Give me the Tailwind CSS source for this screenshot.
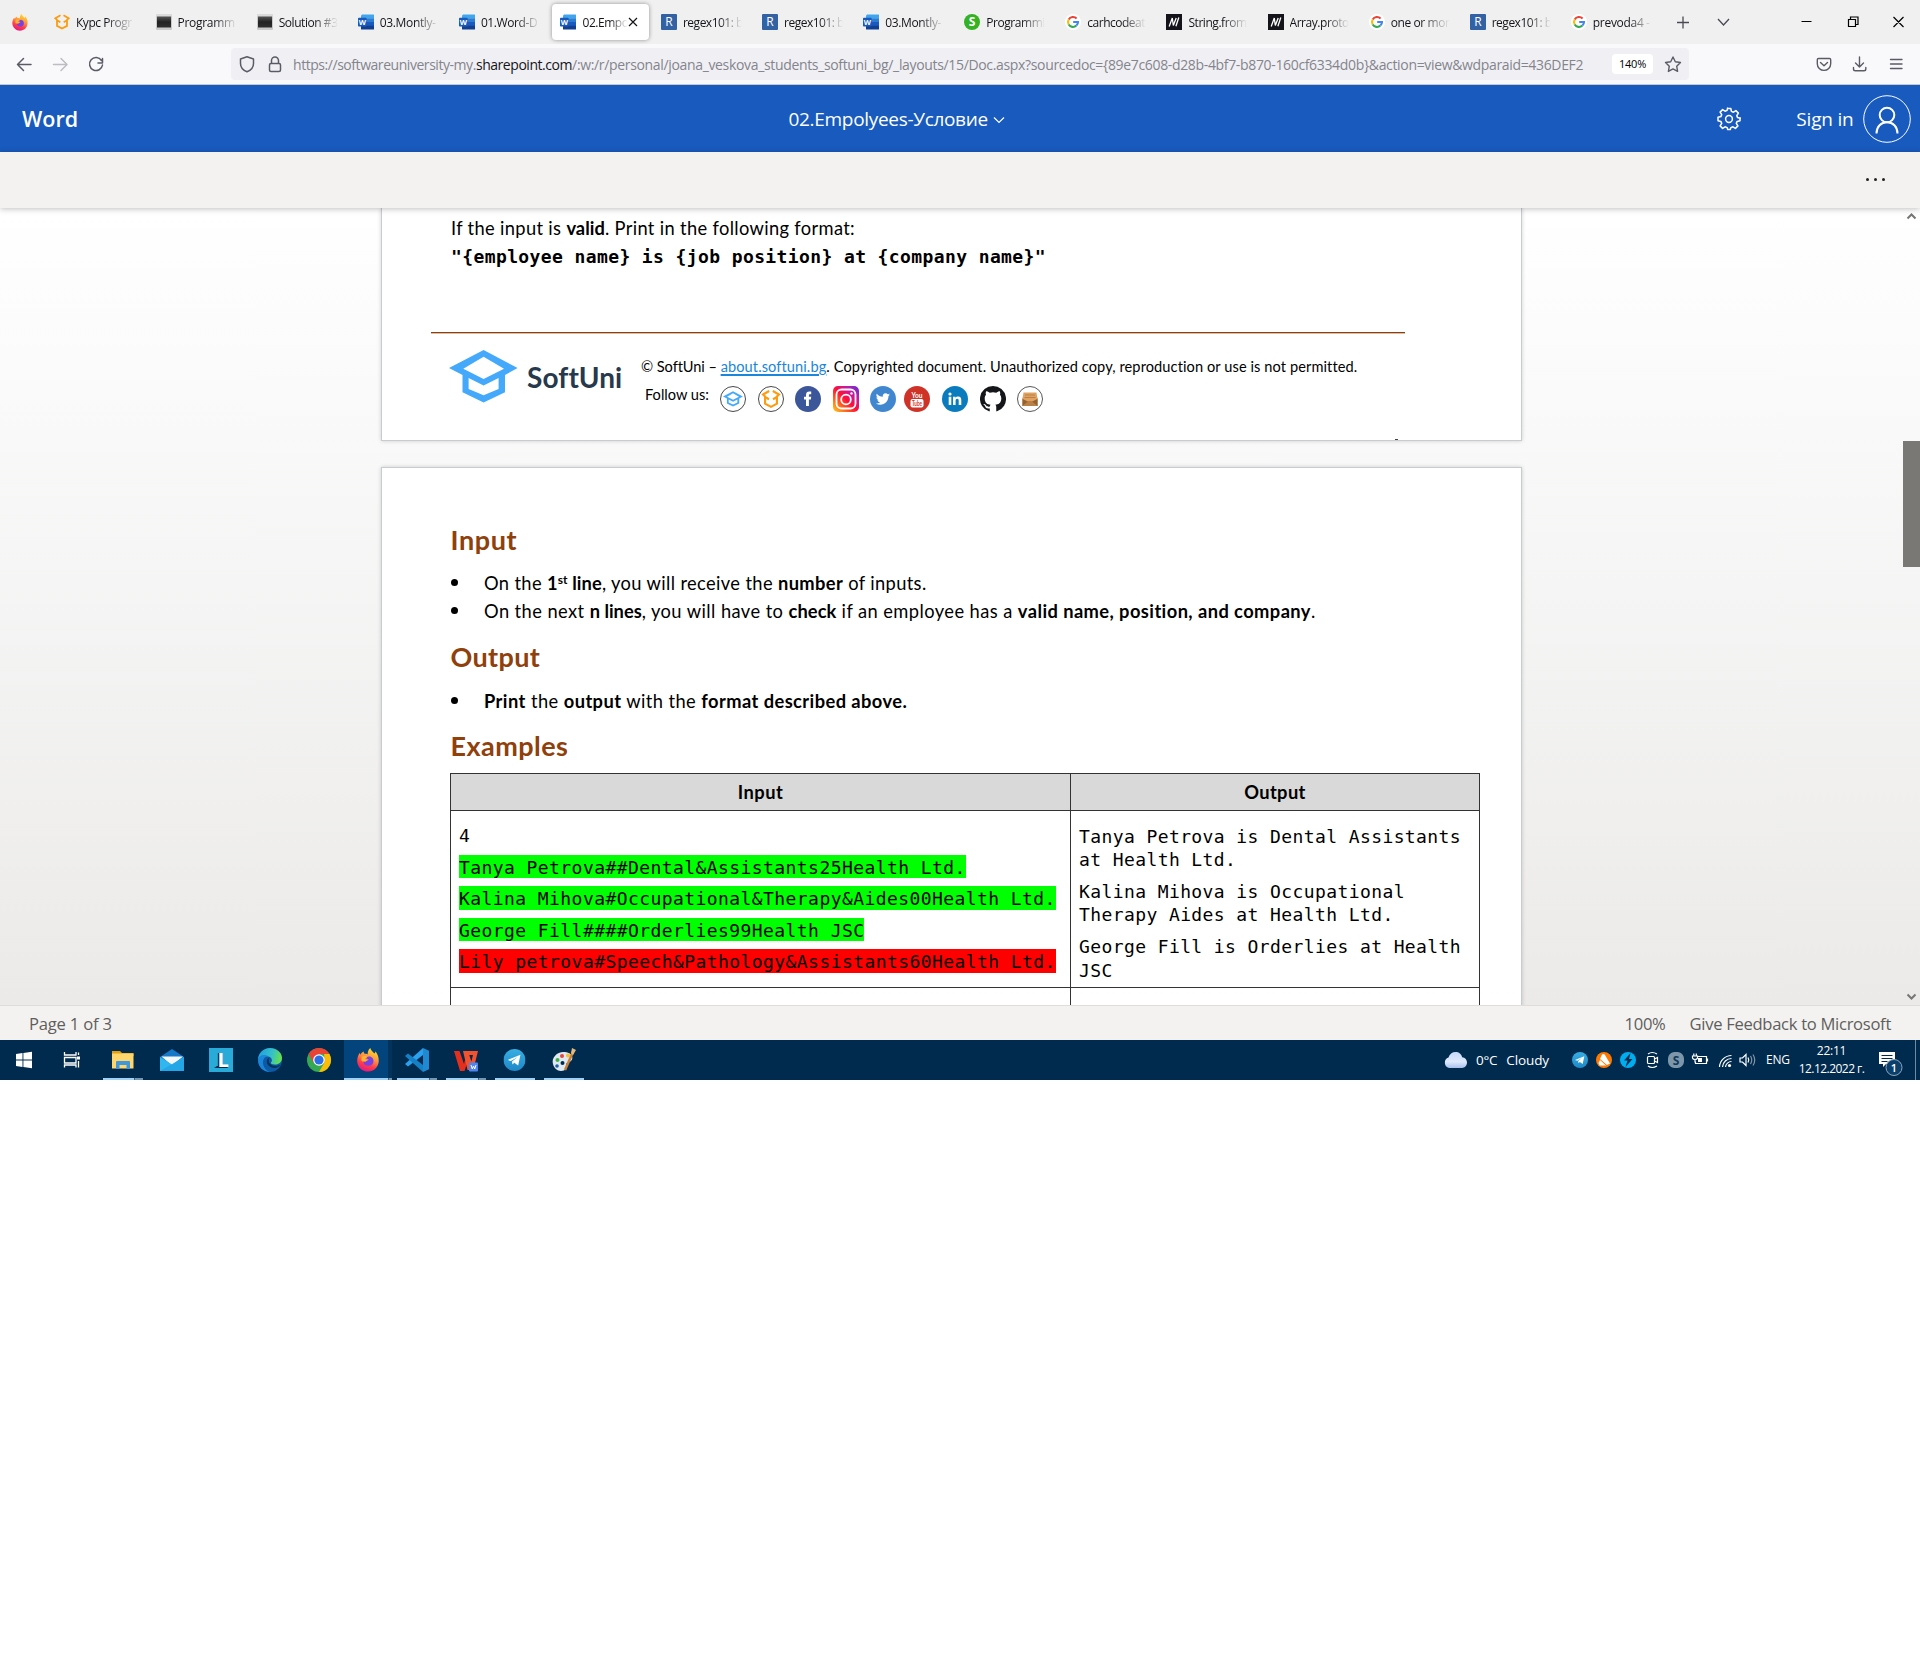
<!DOCTYPE html>
<html lang="en">
<head>
<meta charset="utf-8">
<title>02.Empolyees-Условие</title>
<script src="https://cdn.jsdelivr.net/npm/@tailwindcss/browser@4"></script>
</head>
<body class="bg-white text-black font-['Open_Sans',sans-serif] w-[1920px] h-[1664px] overflow-hidden">
<!-- Icon library -->
<svg width="0" height="0" class="absolute">
  <defs>
    <linearGradient id="gFox" x1="0.7" y1="0" x2="0.3" y2="1"><stop offset="0" stop-color="#ffe226"/><stop offset=".4" stop-color="#ff9640"/><stop offset=".7" stop-color="#ff3c4a"/><stop offset="1" stop-color="#e31587"/></linearGradient>
    <linearGradient id="gIg" x1="0" y1="1" x2="1" y2="0"><stop offset="0" stop-color="#ffd21f"/><stop offset=".3" stop-color="#ff5a1f"/><stop offset=".5" stop-color="#ff0d3c"/><stop offset=".75" stop-color="#c01cab"/><stop offset="1" stop-color="#5b2fd6"/></linearGradient>
    <linearGradient id="gTerm" x1="0" y1="0" x2="0" y2="1"><stop offset="0" stop-color="#555"/><stop offset=".5" stop-color="#222"/><stop offset="1" stop-color="#2e2e2e"/></linearGradient>
    <linearGradient id="gEdge" x1="0" y1="0.2" x2="1" y2="0.4"><stop offset="0" stop-color="#1f9fe0"/><stop offset=".6" stop-color="#35c1c8"/><stop offset="1" stop-color="#66e04e"/></linearGradient>
    <linearGradient id="gTg" x1="0" y1="0" x2="0" y2="1"><stop offset="0" stop-color="#37aee2"/><stop offset="1" stop-color="#1e88c8"/></linearGradient>
    <linearGradient id="gCloud" x1="0" y1="0" x2="0" y2="1"><stop offset="0" stop-color="#c6d8fa"/><stop offset=".6" stop-color="#dfe9fd"/><stop offset="1" stop-color="#a9c0ee"/></linearGradient>
    <symbol id="cap" viewBox="0 0 69 53"><path fill-rule="evenodd" d="M34.6 0L68.6 18L56 25V42.3L34.6 52.5L13.5 42.3V25L0 18ZM34.6 6.7L14.3 18.7L34.6 29L55 18.7ZM19.6 28V39L34.6 45.3L49.6 39V28L34.6 35.6Z"/></symbol>
    <symbol id="codecap" viewBox="0 0 16 16"><path fill="none" stroke="#fc9c10" stroke-width="1.800" stroke-linejoin="miter" d="M6.500 1.300L1.300 4.200L3 5.800V11.900L8 14.600L13 11.900V5.800L14.700 4.200L9.500 1.300M3 6.300L6.300 8.200M13 6.300L9.700 8.200"/></symbol>
    <symbol id="term" viewBox="0 0 16 16"><rect width="16" height="16" rx="1" fill="#c9c9c9"/><rect y="0" width="16" height="2.500" fill="#dadada"/><rect x="1" y="2.500" width="14" height="11" fill="url(#gTerm)"/></symbol>
    <symbol id="word" viewBox="0 0 16 16"><path fill="#41a5ee" d="M4 .5h11.500q.5 0 .5.5v3.500H3V1.500z"/><path fill="#2b7cd3" d="M3 4.300h13v3.800H3z"/><path fill="#185abd" d="M3 8h13v4H3z"/><path fill="#103f91" d="M3 11.800h13V15q0 .5-.5.500h-12Q3 15.500 3 15z"/><rect y="3.700" width="8.600" height="8.800" rx=".8" fill="#185abd"/><text x="4.300" y="10.900" text-anchor="middle" font-size="7.500" font-weight="700" font-family="Open Sans" fill="#fff">W</text></symbol>
    <symbol id="regex" viewBox="0 0 16 16"><rect width="16" height="16" rx="1" fill="#3362a4"/><text x="8" y="12.300" text-anchor="middle" font-size="12" font-family="Open Sans" fill="#fff">R</text></symbol>
    <symbol id="sgreen" viewBox="0 0 16 16"><circle cx="8" cy="8" r="8" fill="#34b224"/><text x="8" y="12.300" text-anchor="middle" font-size="12" font-weight="700" font-family="Open Sans" fill="#fff">S</text></symbol>
    <symbol id="google" viewBox="0 0 16 16"><circle cx="8" cy="8" r="8" fill="#fff"/><g fill="none" stroke-width="2.100"><path stroke="#ea4335" d="M3.700 5.500A5 5 0 0 1 11.600 4.500"/><path stroke="#fbbc05" d="M3.700 5.500A5 5 0 0 0 3.700 10.500"/><path stroke="#34a853" d="M3.700 10.500A5 5 0 0 0 11.400 11.600"/><path stroke="#4285f4" d="M11.400 11.600A5 5 0 0 0 13 8H8.200"/></g></symbol>
    <symbol id="mdn" viewBox="0 0 16 16"><rect width="16" height="16" fill="#15141a"/><path d="M3.200 12.500L6.300 4L7.300 11.500L10.200 4M9.900 12.300L12.800 3.500" stroke="#fff" stroke-width="1.300" fill="none"/></symbol>
    <symbol id="fox" viewBox="0 0 24 26"><path fill="url(#gFox)" d="M14.500 0c.3 2.500 3 4 4.300 6 1-.8 1.200-1.600 1.200-2.600 2.500 3 4 7 3.600 11.200C23 21 18.200 25.500 12 25.500S.6 20.600.3 14.500C.1 11 1.300 7.500 3.300 5.200c0 .9.200 1.700.5 2.100.7-1.500 2-3 3.700-3.600-.2 1 .2 2 1 2.600 1 .1 2.200 0 3.200.6C11.500 4 12.500 1.500 14.500 0z"/><path fill="#7542e5" d="M12 9.500c3.600-1 6.300 2 5.900 5.300-.4 2.900-3 4.700-5.700 4.500-3-.2-5.200-2.300-5.300-5 .8.500 2 .7 3 .3 1-.5 1.300-1.500 2.800-1.600-.5-1.500-2-1.600-3-1.800.4-.9 1.300-1.500 2.300-1.700z"/><path fill="#ffb52e" d="M5 9.500c1.500-1 3.500-1.200 5-.6 1 .3 1 1 .5 1.600-1 .3-1.600.8-2 1.500l3.200 1c-1.200 1.500-3.500 2.200-6.700 1z"/></symbol>
    <symbol id="tg" viewBox="0 0 24 24"><circle cx="12" cy="12" r="12" fill="url(#gTg)"/><path fill="#fff" d="M4.500 12L18.500 6.300L16 18L11.800 15L9.700 17L9.300 13.600L15.500 8.600L8 13.200z"/></symbol>
  </defs>
</svg>

<!-- Tab strip -->
<div class="flex items-center h-11 bg-[#f0f0f0] text-[12px] leading-4">
  <div class="flex items-center justify-center w-[42px] pr-1 shrink-0"><svg width="16" height="17" class="ml-0.5"><use href="#fox"/></svg></div>
  <div class="w-px h-11 bg-[#b5b5b8] mr-[3px]"></div>
  <div class="flex text-[#15141a]">
    <div class="flex items-center w-[101.1px] pl-[9px] gap-[6px]"><svg width="16" height="16" class="shrink-0"><use href="#codecap"/></svg><span class="w-[59px] mt-px overflow-hidden whitespace-nowrap tracking-[-0.450px] [mask-image:linear-gradient(to_right,black_50%,transparent)]">Курс Progr</span></div>
    <div class="flex items-center w-[101.1px] pl-[9.500px] gap-[6px]"><svg width="16" height="16" class="shrink-0"><use href="#term"/></svg><span class="w-[59px] mt-px overflow-hidden whitespace-nowrap tracking-[-0.300px] [mask-image:linear-gradient(to_right,black_60%,transparent)]">Programm</span></div>
    <div class="flex items-center w-[101.1px] pl-[9.500px] gap-[6px]"><svg width="16" height="16" class="shrink-0"><use href="#term"/></svg><span class="w-[59px] mt-px overflow-hidden whitespace-nowrap tracking-[-0.450px] [mask-image:linear-gradient(to_right,black_60%,transparent)]">Solution #3</span></div>
    <div class="flex items-center w-[101.1px] pl-[9.500px] gap-[6px]"><svg width="16" height="16" class="shrink-0"><use href="#word"/></svg><span class="w-[59px] mt-px overflow-hidden whitespace-nowrap tracking-[-0.350px] [mask-image:linear-gradient(to_right,black_60%,transparent)]">03.Montly-</span></div>
    <div class="flex items-center w-[101.1px] pl-[9.500px] gap-[6px]"><svg width="16" height="16" class="shrink-0"><use href="#word"/></svg><span class="w-[59px] mt-px overflow-hidden whitespace-nowrap tracking-[-0.400px] [mask-image:linear-gradient(to_right,black_60%,transparent)]">01.Word-D</span></div>
    <div class="flex items-center w-[97px] mx-[2px] pl-[8px] gap-[6px] h-9 bg-white rounded shadow-[0_0_4px_rgba(0,0,0,0.4)]"><svg width="16" height="16" class="shrink-0"><use href="#word"/></svg><span class="w-[46px] mt-px overflow-hidden whitespace-nowrap tracking-[-0.450px] [mask-image:linear-gradient(to_right,black_60%,transparent)]">02.Empo</span><svg width="10" height="10" viewBox="0 0 10 10" class="shrink-0 -ml-[6px]"><path d="M1 1l8 8M9 1L1 9" stroke="#15141a" stroke-width="1.200"/></svg></div>
    <div class="flex items-center w-[101.1px] pl-[9.500px] gap-[6px]"><svg width="16" height="16" class="shrink-0"><use href="#regex"/></svg><span class="w-[59px] mt-px overflow-hidden whitespace-nowrap tracking-[-0.500px] [mask-image:linear-gradient(to_right,black_60%,transparent)]">regex101: b</span></div>
    <div class="flex items-center w-[101.1px] pl-[9.500px] gap-[6px]"><svg width="16" height="16" class="shrink-0"><use href="#regex"/></svg><span class="w-[59px] mt-px overflow-hidden whitespace-nowrap tracking-[-0.500px] [mask-image:linear-gradient(to_right,black_60%,transparent)]">regex101: b</span></div>
    <div class="flex items-center w-[101.1px] pl-[9.500px] gap-[6px]"><svg width="16" height="16" class="shrink-0"><use href="#word"/></svg><span class="w-[59px] mt-px overflow-hidden whitespace-nowrap tracking-[-0.350px] [mask-image:linear-gradient(to_right,black_60%,transparent)]">03.Montly-</span></div>
    <div class="flex items-center w-[101.1px] pl-[9.500px] gap-[6px]"><svg width="16" height="16" class="shrink-0"><use href="#sgreen"/></svg><span class="w-[59px] mt-px overflow-hidden whitespace-nowrap tracking-[-0.450px] [mask-image:linear-gradient(to_right,black_60%,transparent)]">Programmi</span></div>
    <div class="flex items-center w-[101.1px] pl-[9.500px] gap-[6px]"><svg width="16" height="16" class="shrink-0"><use href="#google"/></svg><span class="w-[59px] mt-px overflow-hidden whitespace-nowrap tracking-[-0.500px] [mask-image:linear-gradient(to_right,black_60%,transparent)]">carhcodeat</span></div>
    <div class="flex items-center w-[101.1px] pl-[9.500px] gap-[6px]"><svg width="16" height="16" class="shrink-0"><use href="#mdn"/></svg><span class="w-[59px] mt-px overflow-hidden whitespace-nowrap tracking-[-0.450px] [mask-image:linear-gradient(to_right,black_60%,transparent)]">String.from</span></div>
    <div class="flex items-center w-[101.1px] pl-[9.500px] gap-[6px]"><svg width="16" height="16" class="shrink-0"><use href="#mdn"/></svg><span class="w-[59px] mt-px overflow-hidden whitespace-nowrap tracking-[-0.450px] [mask-image:linear-gradient(to_right,black_60%,transparent)]">Array.proto</span></div>
    <div class="flex items-center w-[101.1px] pl-[9.500px] gap-[6px]"><svg width="16" height="16" class="shrink-0"><use href="#google"/></svg><span class="w-[59px] mt-px overflow-hidden whitespace-nowrap tracking-[-0.400px] [mask-image:linear-gradient(to_right,black_50%,transparent)]">one or mor</span></div>
    <div class="flex items-center w-[101.1px] pl-[9.500px] gap-[6px]"><svg width="16" height="16" class="shrink-0"><use href="#regex"/></svg><span class="w-[59px] mt-px overflow-hidden whitespace-nowrap tracking-[-0.500px] [mask-image:linear-gradient(to_right,black_60%,transparent)]">regex101: b</span></div>
    <div class="flex items-center w-[101.1px] pl-[9.500px] gap-[6px]"><svg width="16" height="16" class="shrink-0"><use href="#google"/></svg><span class="w-[59px] mt-px overflow-hidden whitespace-nowrap tracking-[-0.300px] [mask-image:linear-gradient(to_right,black_60%,transparent)]">prevoda4 -</span></div>
  </div>
  <svg width="260" height="44" viewBox="1660 0 260 44" class="ml-auto shrink-0" fill="none"><path d="M1675 22.500h12M1681 16.500v12M1716 19l5.500 6 5.500-6" stroke="#4b4a54" stroke-width="1.300"/><path d="M1799.500 21.500h10M1846.500 19.500h7v7h-7zM1848.500 19.500v-2.500h7.500v7.500h-2.500M1891.500 17l10 10M1901.500 17l-10 10" stroke="#000" stroke-width="1.200"/></svg>
</div>

<!-- Address bar -->
<div class="flex items-center h-[41px] bg-[#f9f9fb] border-b border-[#c8c8cc]">
  <svg width="231" height="40" viewBox="0 44 231 40" class="shrink-0" fill="none" stroke-width="1.500" stroke-linecap="round" stroke-linejoin="round"><path stroke="#5b5b66" d="M31 64.500H17.500M23.500 58.500l-6 6 6 6M101.500 60.500a6.500 6.500 0 1 0 1 4.500M102.500 58.500v4.500h-4.500"/><path stroke="#bdbdc2" d="M53.500 64.500H66.500M61 58.500l6 6-6 6"/></svg>
  <div class="flex items-center w-[1458px] h-8 bg-[#f0f0f4] rounded">
    <svg width="62" height="32" viewBox="231 48 62 32" class="shrink-0" fill="none" stroke="#5b5b66" stroke-width="1.500"><path d="M247 56.800l6.500 2.200v4.500c0 4-2.700 6.800-6.500 8.200-3.800-1.400-6.500-4.200-6.500-8.200V59z" stroke-linejoin="round"/><rect x="269.500" y="63.500" width="11" height="8" rx="1.500"/><path d="M271.500 63.500v-3a3.500 3.500 0 0 1 7 0v3"/></svg>
    <span class="whitespace-nowrap text-[14px] leading-[18px] pt-px tracking-[-0.340px] text-[#84848c]"><span class="tracking-[-0.450px]">https://softwareuniversity-my.<span class="text-[#15141a]">sharepoint.com</span></span>/:w:/r/personal/joana_veskova_students_softuni_bg/_layouts/15/Doc.aspx?sourcedoc={89e7c608-d28b-4bf7-b870-160cf6334d0b}&amp;action=view&amp;wdparaid=436DEF2</span>
    <div class="flex items-center justify-center ml-auto w-[41px] h-5 bg-white rounded-sm text-[11px] tracking-[-0.200px] pt-px">140%</div>
    <svg width="36" height="32" viewBox="1653 48 36 32" class="shrink-0"><path d="M1673 57l2.300 4.800 5.200.7-3.800 3.700.9 5.200-4.600-2.500-4.600 2.500.9-5.200-3.800-3.700 5.200-.7z" fill="none" stroke="#5b5b66" stroke-width="1.400" stroke-linejoin="round"/></svg>
  </div>
  <svg width="120" height="40" viewBox="1800 44 120 40" class="ml-auto shrink-0" fill="none" stroke="#5b5b66" stroke-width="1.400" stroke-linecap="round" stroke-linejoin="round"><path d="M1818.500 58.500h11q1.200 0 1.200 1.200v4a6.700 6.700 0 0 1-13.400 0v-4q0-1.200 1.200-1.200zM1820.500 62.500l3.500 3.300 3.500-3.300M1859.500 57v10M1855.500 63l4 4 4-4M1853.500 67.500v1.500q0 1.800 1.800 1.800h8.700q1.800 0 1.800-1.800v-1.500M1890.500 59.500h11.500M1890.500 64h11.500M1890.500 68.500h11.500"/></svg>
</div>

<!-- Word header -->
<div class="flex items-center h-[67px] bg-[#185abd] text-white">
  <span class="w-[766.500px] pl-[22px] text-[21.500px] leading-8 font-semibold">Word</span>
  <div class="flex items-center pl-[22px]">
    <span class="text-[19px] leading-8 tracking-[-0.310px] whitespace-nowrap">02.Empolyees-Условие</span>
    <svg width="12" height="8" viewBox="0 0 12 8" class="ml-[5px] mt-0.5"><path d="M1 1.500l5 5 5-5" fill="none" stroke="#fff" stroke-width="1.200"/></svg>
  </div>
  <svg width="24" height="24" viewBox="-12 -12 24 24" class="ml-auto mr-[55px]" fill="none" stroke="#fff" stroke-width="1.500" stroke-linejoin="round"><circle r="3.400"/><path d="M-1.800-10.500h3.600l.6 2.900 2 .8 2.500-1.600 2.500 2.500-1.600 2.500.8 2 2.900.6-.9 0M11 -1.800v3.600l-2.900.6-.8 2 1.600 2.500-2.500 2.500-2.500-1.600-2 .8-.6 1.900h-2.600l-.6-1.900-2-.8-2.500 1.600-2.500-2.500 1.600-2.500-.8-2-2.900-.6v-3.600l2.900-.6.8-2-1.600-2.500 2.500-2.500 2.500 1.600 2-.8.600-2.900"/></svg>
  <span class="text-[19px] leading-8 tracking-[-0.200px] whitespace-nowrap">Sign in</span>
  <svg width="48" height="48" viewBox="0 0 48 48" class="ml-[9px] mr-[9.500px]" fill="none" stroke="#fff"><circle cx="24" cy="24" r="23.300" stroke-width="1"/><g stroke-width="2"><circle cx="24" cy="20" r="7.300"/><path d="M13.500 38.500c0-7 4.700-11.200 10.500-11.200s10.500 4.200 10.500 11.200"/></g></svg>
</div>
<div class="relative z-10 flex items-center justify-end h-14 pr-[35.500px] pb-[2px] gap-[5px] bg-[#f3f2f1] shadow-[0_1px_6px_rgba(0,0,0,0.25)]">
  <i class="size-[3px] rounded-full bg-[#222]"></i><i class="size-[3px] rounded-full bg-[#222]"></i><i class="size-[3px] rounded-full bg-[#222]"></i>
</div>

<!-- Document canvas -->
<div class="relative h-[798px] overflow-hidden bg-linear-to-b from-white to-[#ebeae9] border-b border-[#dfdddb] font-['Lato',sans-serif] text-[18.300px]">
  <div class="ml-[381px] w-[1141px] h-[233px] pl-[69px] pt-[6px] bg-white border border-t-0 border-[#c8ccd0] shadow-[0_0_4px_rgba(0,0,0,0.18)]">
    <p class="leading-7 tracking-[0.340px] whitespace-nowrap">If the input is <b class="tracking-[0.050px]">valid</b>. Print in the following format:</p>
    <p class="mt-px leading-7 whitespace-nowrap font-['DejaVu_Sans_Mono',monospace] font-bold text-[18px] tracking-[0.390px]">"{employee name} is {job position} at {company name}"</p>
    <div class="mt-[61px] -ml-[20px] w-[974px] h-[2px] bg-[#8f3e0a] border-b border-[#d9bda8]"></div>
    <div class="flex mt-[16px]">
      <svg width="69" height="53" fill="#44a9fb" class="-ml-[2px]"><use href="#cap"/></svg>
      <span class="ml-[9px] mt-[9px] w-[95px] text-[28px] leading-9 tracking-[0.100px] font-bold text-[#27394c]">SoftUni</span>
      <div class="ml-[19px] mt-[7px] text-[14.600px]">
        <p class="leading-5 tracking-[0.090px] whitespace-nowrap"><span class="tracking-[-0.050px]">© SoftUni – </span><a class="text-[#1a86dc] underline decoration-[1.500px] underline-offset-2">about.softuni.bg</a>. Copyrighted document. Unauthorized copy, reproduction or use is not permitted.</p>
        <div class="flex mt-[9px] ml-[4px]">
          <span class="w-[75px] leading-[18px] whitespace-nowrap">Follow us:</span>
          <div class="flex gap-[11.600px]">
            <svg width="26" height="26" viewBox="0 0 26 26"><circle cx="13" cy="13" r="12.500" fill="#fff" stroke="#333" stroke-width=".9"/><use href="#cap" x="3" y="5" width="20" height="16" fill="#44a9fb"/></svg>
            <svg width="26" height="26" viewBox="0 0 26 26"><circle cx="13" cy="13" r="12.500" fill="#fff" stroke="#333" stroke-width=".9"/><use href="#codecap" x="3" y="3.500" width="20" height="19"/></svg>
            <svg width="26" height="26" viewBox="0 0 26 26"><circle cx="13" cy="13" r="13" fill="#3b5699"/><path fill="#fff" d="M11 20v-6.500H9v-2.800h2V9c0-2.300 1.300-3.400 3.300-3.400h1.900v2.700h-1.300c-.8 0-1 .4-1 1v1.400h2.300l-.3 2.800h-2V20z"/></svg>
            <svg width="26" height="26" viewBox="0 0 26 26"><rect width="26" height="26" rx="5" fill="url(#gIg)"/><g fill="none" stroke="#fff" stroke-width="1.800"><rect x="3.500" y="3.500" width="19" height="19" rx="5"/><circle cx="13" cy="13.500" r="4.800"/></g><circle cx="18.500" cy="7.500" r="1.200" fill="#fff"/></svg>
            <div class="flex gap-[8px]"><svg width="26" height="26" viewBox="0 0 26 26"><circle cx="13" cy="13" r="13" fill="#4087cf"/><path fill="#fff" d="M20 8.500c-.5.300-1 .4-1.600.5.500-.4 1-.9 1.200-1.500-.6.300-1.200.6-1.800.7a2.900 2.900 0 0 0-5 2.600c-2.400-.1-4.500-1.200-6-3-.8 1.300-.4 3 .9 3.900-.5 0-.9-.1-1.300-.4 0 1.400 1 2.600 2.300 2.900-.4.100-.8.100-1.300 0 .4 1.200 1.400 2 2.700 2-1.200.9-2.700 1.400-4.300 1.200 5.900 3.500 12.700-.3 12.700-7.300.6-.4 1.100-1 1.500-1.600z"/></svg>
            <svg width="26" height="26" viewBox="0 0 26 26"><circle cx="13" cy="13" r="13" fill="#cf3227"/><text x="13" y="11.500" text-anchor="middle" font-family="Lato" font-weight="700" font-size="7.500" textLength="11" lengthAdjust="spacingAndGlyphs" fill="#fff">You</text><rect x="6.500" y="13" width="13" height="8.500" rx="2" fill="#fff"/><text x="13" y="19.800" text-anchor="middle" font-family="Lato" font-weight="700" font-size="6.500" textLength="10" lengthAdjust="spacingAndGlyphs" fill="#cf3227">Tube</text></svg></div>
            <svg width="26" height="26" viewBox="0 0 26 26"><circle cx="13" cy="13" r="13" fill="#0a7cbd"/><g fill="#fff"><circle cx="8" cy="8" r="1.600"/><path d="M6.700 10.700h2.600V19H6.700zM11 10.700h2.500v1.200c.5-.9 1.400-1.400 2.600-1.400 2.500 0 3.200 1.500 3.200 3.800V19h-2.600v-4.300c0-1.200-.3-2-1.400-2-1.200 0-1.700.8-1.700 2.100V19H11z"/></g></svg>
            <svg width="26" height="26" viewBox="0 0 16 16"><path fill="#14161a" d="M8 0a8 8 0 0 0-2.500 15.600c.4.100.5-.2.500-.4v-1.400c-2.200.5-2.700-1-2.700-1-.4-.9-.9-1.200-.9-1.200-.7-.5.100-.5.100-.5.800.1 1.200.8 1.200.8.700 1.200 1.900.9 2.300.7.100-.5.300-.9.500-1.100-1.800-.2-3.600-.9-3.600-4 0-.9.300-1.600.8-2.100-.1-.2-.4-1 .1-2.100 0 0 .7-.2 2.200.8a7.500 7.500 0 0 1 4 0c1.500-1 2.200-.8 2.200-.8.4 1.100.2 1.900.1 2.100.5.600.8 1.300.8 2.100 0 3.100-1.900 3.800-3.700 4 .3.200.6.700.6 1.500v2.200c0 .2.100.5.500.4A8 8 0 0 0 8 0z"/></svg>
            <svg width="26" height="26" viewBox="0 0 26 26"><circle cx="13" cy="13" r="12.500" fill="#fff" stroke="#444" stroke-width=".9"/><path fill="#a9713f" d="M5.500 12L7.500 10h11l2 2v8h-15z"/><path fill="#e0a260" d="M6.500 6.500h13l1 6.500-7.500 3.500L5.500 13z"/><path fill="#93622f" d="M5.500 20v-7l7.500 4 7.500-4v7z"/><path fill="#b98147" d="M5.500 20l6-5h3l6 5z"/><path d="M8 9h10M7.500 11.500h11" stroke="#b98147" fill="none"/></svg>
          </div>
        </div>
      </div>
    </div>
  </div>

  <div class="mt-[26px] ml-[381px] w-[1141px] h-[640px] pl-[68.500px] pt-[56px] bg-white border border-[#c8ccd0] shadow-[0_0_4px_rgba(0,0,0,0.18)]">
    <h2 class="text-[27px] leading-8 tracking-[0.600px] font-bold text-[#8f400b]">Input</h2>
    <ul class="mt-[13px] leading-[28px] whitespace-nowrap">
      <li class="flex items-center gap-[26px]"><i class="size-[7px] mb-0.5 ml-[0.500px] rounded-full bg-black"></i><span class="tracking-[0.370px]">On the <b class="tracking-[0.100px]">1<sup class="text-[12px] leading-0 -top-[6px]">st</sup> line</b>, you will receive the <b>number</b> of inputs.</span></li>
      <li class="flex items-center gap-[26px]"><i class="size-[7px] mb-0.5 ml-[0.500px] rounded-full bg-black"></i><span class="tracking-[0.430px]">On the next <b class="tracking-[0px]">n lines</b>, you will have to <b class="tracking-[0.100px]">check</b> if an employee has a <b>valid name, position, and company</b>.</span></li>
    </ul>
    <h2 class="mt-[16px] text-[27px] leading-8 tracking-[0.350px] font-bold text-[#8f400b]">Output</h2>
    <ul class="mt-[14px] leading-[28px] whitespace-nowrap">
      <li class="flex items-center gap-[26px]"><i class="size-[7px] mb-0.5 ml-[0.500px] rounded-full bg-black"></i><span class="tracking-[0.430px]"><b>Print</b> the <b>output</b> with the <b>format described above.</b></span></li>
    </ul>
    <h2 class="mt-[15px] text-[27px] leading-8 tracking-[0.450px] font-bold text-[#8f400b]">Examples</h2>
    <div class="mt-[11px] -ml-[0.500px] w-[1030px] grid grid-cols-[620px_409px] border border-r-0 border-[#333]">
      <div class="h-[37px] bg-[#d9d9d9] border-r border-b border-[#333] text-center font-bold leading-[36px] tracking-[0.500px]">Input</div>
      <div class="h-[37px] bg-[#d9d9d9] border-r border-b border-[#333] text-center font-bold leading-[36px] tracking-[0.400px]">Output</div>
      <div class="h-[177px] pt-[9.200px] pl-2 border-r border-b border-[#333] font-['DejaVu_Sans_Mono',monospace] text-[18px] leading-[31.400px] tracking-[0.425px] whitespace-nowrap">
        <p>4</p>
        <p><span class="bg-[#0f0] pt-[1.800px] pb-[0.800px]">Tanya Petrova##Dental&amp;Assistants25Health Ltd.</span></p>
        <p><span class="bg-[#0f0] pt-[1.800px] pb-[0.800px]">Kalina Mihova#Occupational&amp;Therapy&amp;Aides00Health Ltd.</span></p>
        <p><span class="bg-[#0f0] pt-[1.800px] pb-[0.800px]">George Fill####Orderlies99Health JSC</span></p>
        <p><span class="bg-[#f00] pt-[1.800px] pb-[0.800px]">Lily petrova#Speech&amp;Pathology&amp;Assistants60Health Ltd.</span></p>
      </div>
      <div class="flex flex-col gap-[7.800px] h-[177px] pt-[13.500px] pl-2 border-r border-b border-[#333] font-['DejaVu_Sans_Mono',monospace] text-[18px] leading-[23.700px] tracking-[0.400px] whitespace-nowrap">
        <p>Tanya Petrova is Dental Assistants<br>at Health Ltd.</p>
        <p>Kalina Mihova is Occupational<br>Therapy Aides at Health Ltd.</p>
        <p>George Fill is Orderlies at Health<br>JSC</p>
      </div>
      <div class="h-[60px] border-r border-[#333]"></div>
      <div class="h-[60px] border-r border-[#333]"></div>
    </div>
  </div>

  <!-- Scrollbar -->
  <div class="absolute right-0 top-0 h-full w-[17px] flex flex-col">
    <svg width="17" height="17" viewBox="0 0 17 17"><path d="M4.500 10.500l4-4 4 4" fill="none" stroke="#777673" stroke-width="2"/></svg>
    <div class="mt-[216px] h-[126px] bg-[#7a7875]"></div>
    <svg width="17" height="17" viewBox="0 0 17 17" class="mt-auto"><path d="M4.500 6.500l4 4 4-4" fill="none" stroke="#777673" stroke-width="2"/></svg>
  </div>
  <i class="absolute left-[1395px] top-[231px] w-[3px] h-px bg-[#444]"></i>
</div>

<!-- Status bar -->
<div class="flex items-center h-[34px] pt-px pl-[29px] pr-[29px] bg-[#f3f2f1] text-[#605e5c] text-[16.600px] leading-[33px] tracking-[-0.300px] whitespace-nowrap">
  <span class="tracking-[-0.200px]">Page 1 of 3</span>
  <span class="ml-auto mr-[24px]">100%</span>
  <span>Give Feedback to Microsoft</span>
</div>

<!-- Taskbar -->
<div class="flex h-10 bg-[#002b4e] text-white">
  <svg width="600" height="40" viewBox="0 1040 600 40" class="shrink-0">
    <rect x="344" y="1040" width="44" height="40" fill="#04447c"/><rect x="388" y="1040" width="4" height="40" fill="#03325a"/>
    <g fill="#9fd0f5"><path d="M103 1078h31v2h-31zM344 1078h44v2h-44zM397 1078h32v2h-32zM446 1078h32v2h-32zM495 1078h40v2h-40zM544 1078h40v2h-40z"/></g>
    <g fill="#7298b5"><path d="M134.500 1078h8.500v2h-8.500zM388.500 1078h3.500v2h-3.500zM429.500 1078h7.500v2h-7.500zM478.500 1078h7.500v2h-7.500z"/></g>
    <path fill="#fff" d="M16 1054l6.500-1v6.600H16zM23.400 1052.900l8.600-1.100v7.800h-8.600zM16 1060.500h6.500v6.600l-6.500-1zM23.400 1060.500H32v7.700l-8.600-1.200z"/>
    <path fill="none" stroke="#fff" stroke-width="1.300" d="M64.500 1052v3h11.500v-3M64.500 1067.500v-2.500h11.500v2.500M64.500 1057.500h11.500v5.500h-11.500zM78.500 1052.500v2.500M78.500 1061v6.500"/><rect x="77" y="1056.500" width="3" height="3" fill="#fff"/>
    <path fill="#e0a010" d="M112 1051h8l2 2h11.500v3H112z"/><rect x="112" y="1053.500" width="21.500" height="15" fill="#ffd66b"/><path fill="#3f97dc" d="M116 1069v-7q0-1 1-1h12q1 0 1 1v7h-3.500v-4h-7v4z"/>
    <path fill="#1578c8" d="M160 1057l12-8 12 8v6h-24z"/><path fill="#f4f8fb" d="M161.500 1056.500h21.500l-11 9z"/><path fill="#31b6ef" d="M160 1057v14h24v-14l-12 7.500z"/><path fill="#1c9ddf" d="M184 1057v14h-24z" opacity=".6"/>
    <rect x="209" y="1048" width="24" height="24" fill="#29abd9"/><path fill="#10294a" d="M214 1068l3-2h4l-2 2z"/><text x="216" y="1068" font-family="Open Sans" font-weight="700" font-size="22" fill="#10294a">L</text><text x="217.500" y="1067" font-family="Open Sans" font-weight="700" font-size="20" fill="#fff">L</text>
    <circle cx="270" cy="1060" r="12" fill="#0c5aa6"/><path fill="url(#gEdge)" d="M258 1060c0-7 5.500-12 12-12s12 4.500 12 10c0 4-3 6.500-7 6.500-3 0-4.500-1-4-2 1.500-1 1.500-5-2.500-6-4.500-1-10 0-10.500 3.500z"/><path fill="#1b85d8" d="M258 1060c0-4 6-6.500 10-4-4 1-5 4-5 7 .5 5 4 8 7 9-6.500 0-12-5-12-12z"/><path fill="#002b4e" d="M270 1057.500c-1.500 1-2 3.500-.5 5.500 2.500 3.500 7.500 3.500 11.500 1.500-3 4.500-9 4-12 1.500-3.500-3-2.500-8 1-8.500z" opacity=".85"/>
    <circle cx="319" cy="1060" r="12" fill="#34a853"/><path fill="#ea4335" d="M308.600 1054A12 12 0 0 1 329.400 1054H319v6l-5.200 3z"/><path fill="#fbbc05" d="M329.400 1054a12 12 0 0 1-10.400 18l5.200-9 0-9z"/><circle cx="319" cy="1060" r="5.800" fill="#fff"/><circle cx="319" cy="1060" r="4.600" fill="#2a6fe8"/>
    <use href="#fox" x="356.500" y="1048" width="23" height="24"/>
    <path fill="#1f8ad2" d="M423 1048l6 2.800v18.500l-6 2.700z"/><path fill="#2ba0ec" d="M423 1048v7l-15 11.500-3-2.500z"/><path fill="#1480c6" d="M423 1072v-7l-15-11.500-3 2.500z"/>
    <path fill="#e62e1c" d="M454 1051h5.500l4.500 13 2.500-10 2 5-4 12h-4.500z"/><path fill="#f4512c" d="M463 1051h5l3.500 11-2 8h-2zM468 1051h10l-5 20h-4l4-16h-4z"/><rect x="469" y="1062.500" width="9" height="9" rx="1" fill="#4d86f0"/><path d="M471 1065l1.300 4 1.200-3 1.200 3 1.300-4" stroke="#fff" fill="none"/>
    <use href="#tg" x="503.500" y="1049" width="22" height="22"/>
    <path fill="#dfe9f2" d="M553 1064c-2-7 5-13 12-12 7 .5 9 6 6 9-2 2-5 1-5 4s0 6-5 6c-4 0-7-3-8-7z"/><g><circle cx="557.500" cy="1060" r="2" fill="#3fae49"/><circle cx="562" cy="1056" r="2" fill="#e2483d"/><circle cx="568" cy="1055.500" r="2" fill="#f5c02b"/><circle cx="557" cy="1066" r="1.800" fill="#1b5fae"/><circle cx="562.500" cy="1063" r="2" fill="#002b4e"/></g><path d="M573 1052l-8 18" stroke="#c9813a" stroke-width="2.500"/><path d="M571 1053l1-5 4 2-3 5z" fill="#e8ba7a"/>
  </svg>
  <svg width="32" height="40" viewBox="1441 1040 32 40" class="ml-auto shrink-0"><path fill="url(#gCloud)" d="M1450 1068a5.500 5.500 0 0 1-.5-10.500c1-3.500 3.700-5.500 7-5.500 3.500 0 6 2 6.600 5.200 3.200.3 4.900 2.600 4.900 5.400s-2 5.400-5 5.400z"/></svg>
  <div class="flex items-center h-10 pl-1 pr-[16px] text-[13.500px] whitespace-nowrap w-[93px] justify-between shrink-0"><span class="tracking-[-0.300px]">0°C</span><span class="tracking-[-0.100px]">Cloudy</span></div>
  <svg width="201" height="40" viewBox="1565 1040 201 40" class="shrink-0">
    <use href="#tg" x="1572" y="1052" width="16" height="16"/>
    <circle cx="1604" cy="1060" r="8" fill="#ff7800"/><path fill="#fff" d="M1602 1054.500q2-1 3 .5l5 8.500-3 1.500-7-6zM1598.500 1063l1.500-3 6 5.500h-6.500z"/>
    <circle cx="1628" cy="1060" r="8" fill="#00aeef"/><path fill="#002b4e" d="M1630.500 1053l-6.500 7.500h3.500l-2 6.500 7-8h-3.500z"/>
    <g fill="none" stroke="#fff" stroke-width="1.200"><rect x="1647.500" y="1056.500" width="7" height="7" rx="1"/><path d="M1654.500 1059l3-1.500v5l-3-1.500M1648 1054q4-3 9 0M1648 1066q4 3 9 0"/></g>
    <rect x="1668" y="1052" width="16" height="16" rx="6.500" fill="#7d96aa"/><text x="1676" y="1064.500" text-anchor="middle" font-family="Open Sans" font-weight="700" font-size="12" fill="#12395a">S</text>
    <g fill="none" stroke="#fff" stroke-width="1.200"><path d="M1698 1056.500h8.500v7h-11v-2M1707.500 1058.500v3M1692.500 1056h5v2q-.5 1.500-2.500 1.500t-2.500-1.500zM1693.800 1055.500v-2M1696.300 1055.500v-2M1695 1059.500v3"/></g><rect x="1698" y="1058" width="4" height="4" fill="#fff"/>
    <g fill="none" stroke="#fff" stroke-width="1.200"><path d="M1719.500 1067a12 12 0 0 1 12-11.500M1722.500 1067a9 9 0 0 1 9-8.500M1725.500 1067a6 6 0 0 1 6-5.500"/></g><circle cx="1729.500" cy="1065.500" r="1.600" fill="#fff"/>
    <g fill="none" stroke="#fff" stroke-width="1.200"><path d="M1740 1058h2.500l3.500-3.500v11l-3.500-3.500h-2.500zM1748 1057.500q1.500 2.500 0 5"/><path d="M1750.500 1056q2.500 4 0 8M1753 1054.500q3.500 5.500 0 11" opacity=".5"/></g>
  </svg>
  <span class="w-[24px] text-[12px] leading-10 tracking-[-0.200px]">ENG</span>
  <div class="ml-[6px] w-[71px] pt-[2px] text-center text-[12px] leading-[17.800px] tracking-[-0.550px] whitespace-nowrap"><p class="tracking-[-0.250px]">22:11</p><p>12.12.2022 г.</p></div>
  <svg width="53" height="40" viewBox="1867 1040 53 40" class="shrink-0"><path fill="#fff" d="M1879 1052h16v12h-9l-3 3v-3h-4z"/><path d="M1881.500 1055.500h11M1881.500 1058.500h11M1881.500 1061.500h6" stroke="#002b4e"/><circle cx="1894" cy="1067.500" r="8" fill="#0b3f6b" stroke="#8ea6ba"/><text x="1894" y="1071.500" text-anchor="middle" font-family="Open Sans" font-weight="600" font-size="11" fill="#fff">1</text><path d="M1915.500 1040v40" stroke="#6d8aa3"/></svg>
</div>
</body>
</html>
